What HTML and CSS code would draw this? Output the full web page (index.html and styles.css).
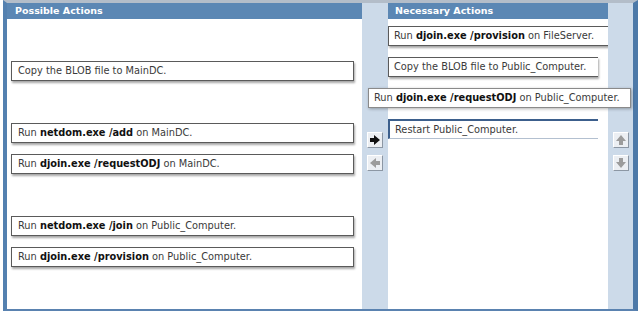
FILE: index.html
```html
<!DOCTYPE html>
<html lang="en">
<head>
    <meta charset="UTF-8">
    <title>Build List and Reorder</title>
    <link rel="stylesheet" href="styles.css">
</head>
<body>

    <div class="window">
        <div class="pane pane-left">
            <div class="pane-head">Possible Actions</div>
            <div class="list list-left">
                <div class="slot"></div>
                <div class="item">Copy the BLOB file to MainDC.</div>
                <div class="slot"></div>
                <div class="item">Run <b>netdom.exe /add</b> on MainDC.</div>
                <div class="item">Run <b>djoin.exe /requestODJ</b> on MainDC.</div>
                <div class="slot"></div>
                <div class="item">Run <b>netdom.exe /join</b> on Public_Computer.</div>
                <div class="item">Run <b>djoin.exe /provision</b> on Public_Computer.</div>
            </div>
        </div>

        <div class="rail">
            <button class="btn" title="Add">
                <svg width="12" height="12" viewBox="0 0 12 12"><polygon points="1,4 5,4 5,1 11,6 5,11 5,8 1,8" fill="#111"/></svg>
            </button>
            <button class="btn" title="Remove">
                <svg width="12" height="12" viewBox="0 0 12 12"><polygon points="11,4 7,4 7,1 1,6 7,11 7,8 11,8" fill="#9c9c9c"/></svg>
            </button>
        </div>

        <div class="pane pane-right">
            <div class="pane-head">Necessary Actions</div>
            <div class="list list-right">
                <div class="item open wide">Run <b>djoin.exe /provision</b> on FileServer.</div>
                <div class="item open">Copy the BLOB file to Public_Computer.</div>
                <div class="item dragging">Run <b>djoin.exe /requestODJ</b> on Public_Computer.</div>
                <div class="item open selected">Restart Public_Computer.</div>
            </div>
        </div>

        <div class="rail">
            <button class="btn" title="Move up">
                <svg width="12" height="12" viewBox="0 0 12 12"><polygon points="4,11 4,7 1,7 6,1 11,7 8,7 8,11" fill="#9c9c9c"/></svg>
            </button>
            <button class="btn" title="Move down">
                <svg width="12" height="12" viewBox="0 0 12 12"><polygon points="4,1 4,5 1,5 6,11 11,5 8,5 8,1" fill="#9c9c9c"/></svg>
            </button>
        </div>
    </div>

</body>
</html>
```

FILE: styles.css
```css
body {
    margin: 0;
    background: #fff;
    font-family: "DejaVu Sans", Verdana, sans-serif;
}
.window {
    display: flex;
    width: 635px;
    height: 311px;
    margin-left: 3px;
    box-sizing: border-box;
    border-top: 3px solid #b3bdc9;
    border-left: 4px solid #5481b0;
    border-right: 5px solid #4d79a8;
    border-bottom: 2px solid #5a82b0;
}
.pane {
    background: #fff;
}
.pane-left {
    width: 355px;
}
.pane-right {
    width: 220px;
}
.pane-head {
    height: 16px;
    line-height: 16px;
    padding-left: 8px;
    background-color: #5b87b4;
    color: #fff;
    font-size: 9.5px;
    font-weight: bold;
}
.pane-right .pane-head {
    padding-left: 7px;
}
.list {
    display: flex;
    flex-direction: column;
    gap: 11px;
}
.list-left {
    padding: 11px 0 0 4px;
}
.list-right {
    padding-top: 7px;
}
.slot {
    height: 20px;
}
.item {
    height: 20px;
    width: 343px;
    box-sizing: border-box;
    padding-left: 6px;
    border: 1px solid #5a5a5a;
    background: #fff;
    box-shadow: 1px 2px 2px rgba(0, 0, 0, 0.35);
    font-size: 9.8px;
    line-height: 18px;
    color: #3a3a3a;
    white-space: nowrap;
}
.item b {
    color: #111;
}
.item.open {
    width: 210px;
    padding-left: 5px;
    border-right: none;
}
.item.wide {
    width: 224px;
}
.item.dragging {
    position: relative;
    z-index: 1;
    width: 263px;
    margin-left: -20px;
    padding-left: 5px;
    border-color: #8a8a8a;
    box-shadow: 1px 1px 3px rgba(0, 0, 0, 0.3);
}
.item.selected {
    border-top: 2px solid #3c5f8c;
    border-left: 2px solid #3c5f8c;
    border-bottom: 1px solid #b3c0d0;
    box-shadow: none;
    padding-left: 5px;
    line-height: 17px;
}
.rail {
    width: 26px;
    background-color: #ccdae9;
    display: flex;
    flex-direction: column;
    align-items: center;
    gap: 7px;
    padding-top: 129px;
    box-sizing: border-box;
}
.rail:last-child {
    width: 25px;
}
.btn {
    width: 16px;
    height: 16px;
    padding: 0;
    display: flex;
    align-items: center;
    justify-content: center;
    background-color: #eceff3;
    border: 1px solid;
    border-color: #fff #8c97a4 #8c97a4 #fff;
    cursor: pointer;
}
```
